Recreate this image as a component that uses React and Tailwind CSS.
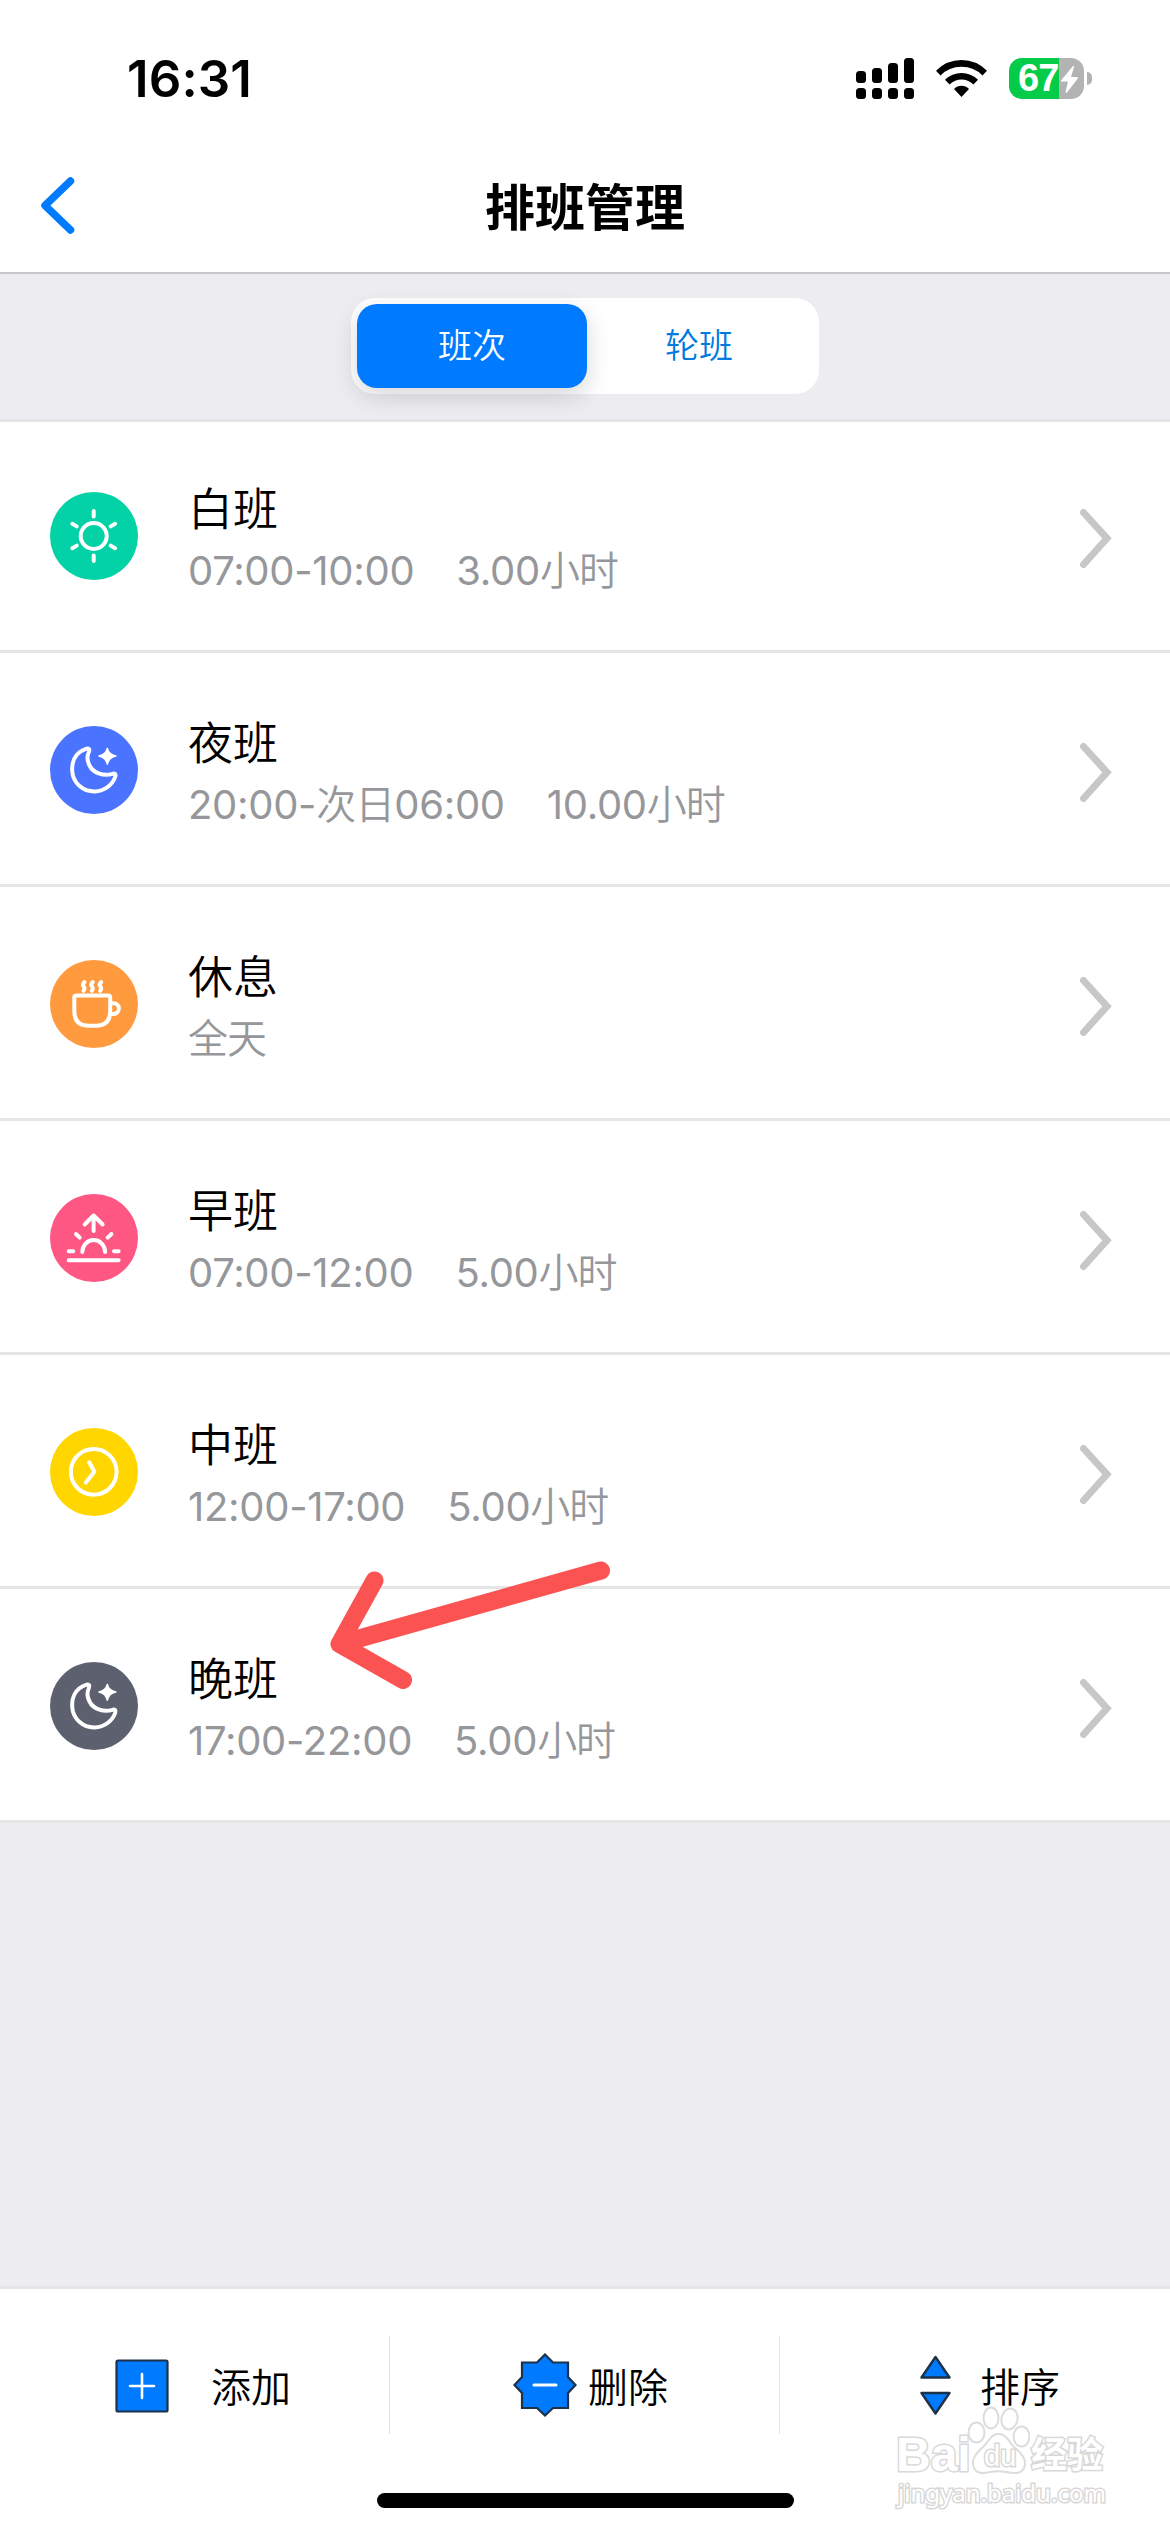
import { useState } from 'react';
import clsx from 'clsx';

const SHIFTS = [
  { name: '白班', time: '07:00-10:00', hours: '3.00小时', icon: 'sun', color: 'bg-[#02d2a5]' },
  { name: '夜班', time: '20:00-次日06:00', hours: '10.00小时', icon: 'moon', color: 'bg-[#4a74ff]' },
  { name: '休息', time: '全天', hours: '', icon: 'cup', color: 'bg-[#ff9a3e]' },
  { name: '早班', time: '07:00-12:00', hours: '5.00小时', icon: 'sunrise', color: 'bg-[#ff5784]' },
  { name: '中班', time: '12:00-17:00', hours: '5.00小时', icon: 'clock', color: 'bg-[#ffd600]' },
  { name: '晚班', time: '17:00-22:00', hours: '5.00小时', icon: 'moon', color: 'bg-[#5d616f]' },
];

const TABS = ['班次', '轮班'];

const SHIFT_ICONS = {
  sun: (
    <>
      <circle cx="43.7" cy="44" r="13" />
      <path d="M43.7 19v5.5M43.7 63.5V69M22.3 31.8l4.4 2.6M65.1 31.8l-4.4 2.6M22.3 56.2l4.4-2.6M65.1 56.2l-4.4-2.6" />
    </>
  ),
  moon: (
    <>
      <path d="M36 22.8C25 26.5 21.7 36 22.2 45C23 57 33 65.6 44.5 65.5C55 65.3 63 58 65.3 50.5C66 48 64.5 46.8 62.5 47.8C54 50.5 43.5 47.5 39.5 39.5C37 34.5 37 30 38.7 26.5C40 23.5 39.3 21.7 36 22.8Z" />
      <path d="M57.3 22.5Q58.6 28.7 65.8 30Q58.6 31.3 57.3 38.2Q56 31.3 49 30Q56 28.7 57.3 22.5Z" fill="currentColor" strokeWidth="1.6" />
    </>
  ),
  cup: (
    <>
      <path d="M26.5 35.5H58Q60.2 35.5 60.2 37.7V51Q60.2 65.7 46 65.7H38.5Q24.3 65.7 24.3 51V37.7Q24.3 35.5 26.5 35.5Z" />
      <path d="M60.5 43.2H63.5A5.3 5.3 0 0 1 63.5 54H60.5" />
      <path d="M34.5 22q-2.6 2.6-.8 4.6q1.6 2-.2 4.2M42.8 22q-2.6 2.6-.8 4.6q1.6 2-.2 4.2M51.2 22q-2.6 2.6-.8 4.6q1.6 2-.2 4.2" />
    </>
  ),
  sunrise: (
    <>
      <path d="M18.7 66.3H68.6M18.7 57.3H23.3M64 57.3H68.6M32.3 58A11.4 11.9 0 0 1 55.1 58M26 40l3.7 3.7M61.4 40l-3.7 3.7" />
      <path d="M43.6 37V21.5M34.7 30.5L43.6 21.5L52.6 30.5" />
    </>
  ),
  clock: (
    <>
      <circle cx="43.7" cy="43.8" r="22.9" />
      <path d="M39.2 34.3L44.4 43.8L35.8 54.5" />
    </>
  ),
};

// digits carry a slightly heavier weight than the Chinese characters beside them
function MixedText({ text }) {
  return (
    <span>
      {text.split(/([\d:.-]+)/).filter(Boolean).map((part, i) => (
        <span key={i} className={/\d|-/.test(part) ? 'font-normal tracking-[-0.3px]' : 'font-[350] tracking-[-1px]'}>
          {part}
        </span>
      ))}
    </span>
  );
}

function StatusBar() {
  return (
    <div className="flex h-[156px] items-center justify-between pl-[127px] pr-[78px]">
      <span className="pt-[1px] font-['Inter'] text-[51px] font-semibold leading-none tracking-[0.1px]">16:31</span>
      <div className="flex items-center">
        <svg width="58" height="41" viewBox="0 0 58 41">
          <rect x="0" y="13" width="10" height="12" rx="3.5" />
          <rect x="16" y="10" width="10" height="15" rx="3.5" />
          <rect x="32" y="5" width="10" height="20" rx="3.5" />
          <rect x="48" y="0" width="10" height="25" rx="3.5" />
          {[0, 16, 32, 48].map((x) => (
            <rect key={x} x={x} y="30" width="10" height="11" rx="3.5" />
          ))}
        </svg>
        <svg className="ml-[22px]" width="51" height="37" viewBox="0 0 51 37">
          <path d="M0 10.8Q10.5 0 25.5 0T51 10.8L46.5 15.5Q38 6.8 25.5 6.8T4.5 15.5Z" />
          <path d="M9 19.8Q16 13 25.5 13T42 19.8L37.4 24.6Q32 19.6 25.5 19.6T13.6 24.6Z" />
          <path d="M18 28.9Q21.2 25.7 25.5 25.7T33 28.9L25.5 37Z" />
        </svg>
        <div className="relative ml-[22px] flex h-[41px] w-[75px] items-center rounded-[13px] bg-[linear-gradient(to_right,#04cb48_50px,#b3b3b3_50px)]">
          <span className="ml-[9px] font-['Liberation_Sans'] text-[38px] font-bold leading-none tracking-[-1px] text-white">67</span>
          <svg className="absolute left-[52px] top-[8px]" width="17" height="27" viewBox="0 0 17 27" fill="white">
            <path d="M12 0L0 14.5Q-.3 15.6 1 15.6H7L4.5 26Q4.8 27.5 6 26.5L16.8 12.5Q17 11 15.8 11H10L13 1Q13 -.5 12 0Z" />
          </svg>
        </div>
        <span className="ml-[3px] h-[13px] w-[5px] rounded-r-full bg-[#b3b3b3]" />
      </div>
    </div>
  );
}

function NavBar() {
  return (
    <div className="grid h-[118px] grid-cols-[120px_1fr_120px] border-b-2 border-[#c8c8cc]">
      <button className="flex items-start pl-[40px] pt-[21px]">
        <svg width="35" height="57" viewBox="0 0 35 57" fill="none" stroke="#007aff" strokeWidth="7.5" strokeLinecap="round" strokeLinejoin="round">
          <path d="M30.5 4L5 28.5L30.5 53" />
        </svg>
      </button>
      <h1 className="pt-[27px] text-center text-[50px] font-bold leading-[50px]">排班管理</h1>
    </div>
  );
}

function ShiftRow({ shift }) {
  return (
    <li className="flex h-[234px] border-b-[3px] border-[#e5e5e5] pl-[50px] pr-[58px]">
      <span className={clsx('mt-[73px] h-[88px] w-[88px] rounded-full text-white', shift.color)}>
        <svg viewBox="0 0 88 88" fill="none" stroke="currentColor" strokeWidth="4" strokeLinecap="round" strokeLinejoin="round">
          {SHIFT_ICONS[shift.icon]}
        </svg>
      </span>
      <div className="ml-[50px] flex-1 pt-[66px]">
        <p className="text-[45px] font-[350] leading-[50px]">{shift.name}</p>
        <p className="mt-[10px] flex gap-[42px] text-[40px] leading-[52px] text-[#96979b]">
          <MixedText text={shift.time} />
          <MixedText text={shift.hours} />
        </p>
      </div>
      <svg className="mt-[90px]" width="32" height="59" viewBox="0 0 32 59" fill="none" stroke="#c7c7ca" strokeWidth="7" strokeLinecap="round" strokeLinejoin="miter">
        <path d="M3.5 3.5L27 29.3L3.5 55.5" />
      </svg>
    </li>
  );
}

function Watermark() {
  return (
    <div className="absolute left-[896px] top-[2404px] h-[108px] w-[220px] font-['Noto_Sans','Noto_Sans_CJK_SC',sans-serif] text-white">
      <span className="absolute left-0 top-[26px] font-['Liberation_Sans'] text-[48px] font-bold leading-[50px] [-webkit-text-stroke:3px_#d8d8d8] [paint-order:stroke]">Bai</span>
      <svg className="absolute left-[70px] top-[0px]" width="64" height="72" viewBox="0 0 64 72" fill="white" stroke="#dcdcdc" strokeWidth="2">
        <ellipse cx="10.5" cy="28.5" rx="8" ry="10" />
        <ellipse cx="25" cy="14" rx="7.5" ry="10.5" />
        <ellipse cx="43.5" cy="15" rx="8" ry="10.5" transform="rotate(12 43.5 15)" />
        <ellipse cx="55.5" cy="32.5" rx="8" ry="10" />
        <path d="M32 30C41 30 42 37 48 43C55 49 60 54 59 61C57 71 48 69.5 40 68Q32 66.5 24 68C16 70 8 70 7 60C6 53 12 48 18 42C23 37 25 30 32 30Z" />
      </svg>
      <span className="absolute left-[88px] top-[34px] font-['Liberation_Sans'] text-[29px] leading-[36px] [-webkit-text-stroke:3px_#d8d8d8] [paint-order:stroke]">du</span>
      <span className="absolute left-[135px] top-[29px] text-[36px] font-bold leading-[44px] [-webkit-text-stroke:3px_#d8d8d8] [paint-order:stroke]">经验</span>
      <span className="absolute left-[2px] top-[72px] text-[24px] leading-[34px] [-webkit-text-stroke:3px_#d8d8d8] [paint-order:stroke]">jingyan.baidu.com</span>
    </div>
  );
}

export default function App() {
  const [tab, setTab] = useState('班次');

  return (
    <div className="relative flex h-[2532px] w-[1170px] flex-col overflow-hidden bg-white font-['Inter','Noto_Sans_CJK_SC',sans-serif] text-black">
      <StatusBar />
      <NavBar />

      {/* Segmented control */}
      <div className="flex h-[148px] justify-center border-b-[3px] border-[#e5e5e5] bg-[#edecf1] pt-[24px]">
        <div className="flex h-[96px] w-[468px] rounded-[24px] bg-white p-[6px]">
          {TABS.map((t) => (
            <button
              key={t}
              onClick={() => setTab(t)}
              className={clsx(
                'h-[84px] rounded-[20px] pb-[1px] text-[34px] font-[350]',
                t === tab ? 'w-[230px] bg-[#007aff] text-white shadow-[0_8px_24px_rgba(0,0,0,0.16)]' : 'flex-1 pr-[2px] text-[#007ae0]'
              )}
            >
              {t}
            </button>
          ))}
        </div>
      </div>

      {/* Shift list */}
      <ul className="-mt-[3px]">
        <li className="h-[3px] -mb-[3px] bg-[#e5e5e5]" />
        {SHIFTS.map((s) => <ShiftRow key={s.name} shift={s} />)}
      </ul>
      <div className="flex-1 bg-[#edecf1]" />

      {/* Bottom toolbar */}
      <div className="flex h-[246px] flex-col justify-between border-t-[3px] border-[#e5e5e5] pb-[24px]">
        <div className="mt-[47px] grid h-[98px] grid-cols-3 text-[40px] font-[350] leading-[60px]">
          <button className="flex items-center border-r border-[#e2e2e2] pl-[115px]">
            <svg className="mt-[2px]" width="54" height="54" viewBox="0 0 54 54" fill="#007aff" stroke="#1d3149" strokeWidth="2.2">
              <rect x="1.5" y="1.5" width="51" height="51" rx="1.5" />
              <path d="M15 27H39M27 15V39" stroke="white" strokeWidth="2.6" strokeLinecap="round" />
            </svg>
            <span className="ml-[42px] pt-[6px]">添加</span>
          </button>
          <button className="flex items-center border-r border-[#e2e2e2] pl-[123px]">
            <svg width="64" height="64" viewBox="0 0 64 64" fill="#007aff" stroke="#1d3149" strokeWidth="2.2">
              <path d="M32 1.5L40 9.5H55V24L62.5 32L55 40V55H40L32 62.5L24 55H9V40L1.5 32L9 24V9.5H24Z" />
              <path d="M21 32H43" stroke="white" strokeWidth="3" strokeLinecap="round" />
            </svg>
            <span className="ml-[11px] pt-[6px]">删除</span>
          </button>
          <button className="flex items-center pl-[140px]">
            <svg width="31" height="60" viewBox="0 0 31 60" fill="#007aff" stroke="#1d3149" strokeWidth="2.4" strokeLinejoin="round">
              <path d="M15.5 2L29.5 22.5H1.5ZM15.5 58.5L29.5 38H1.5Z" />
            </svg>
            <span className="ml-[29px] pt-[6px]">排序</span>
          </button>
        </div>
        <div className="h-[15px] w-[417px] self-center rounded-full bg-black" />
      </div>

      <Watermark />

      {/* Pointer to the last shift */}
      <svg className="absolute left-[320px] top-[1550px]" width="300" height="150" viewBox="320 1550 300 150" fill="none" stroke="#fb5252" strokeWidth="18" strokeLinecap="round" strokeLinejoin="round">
        <path d="M601 1570.5L339.5 1644M374.5 1580.5L339.5 1644L403 1680" />
      </svg>
    </div>
  );
}
